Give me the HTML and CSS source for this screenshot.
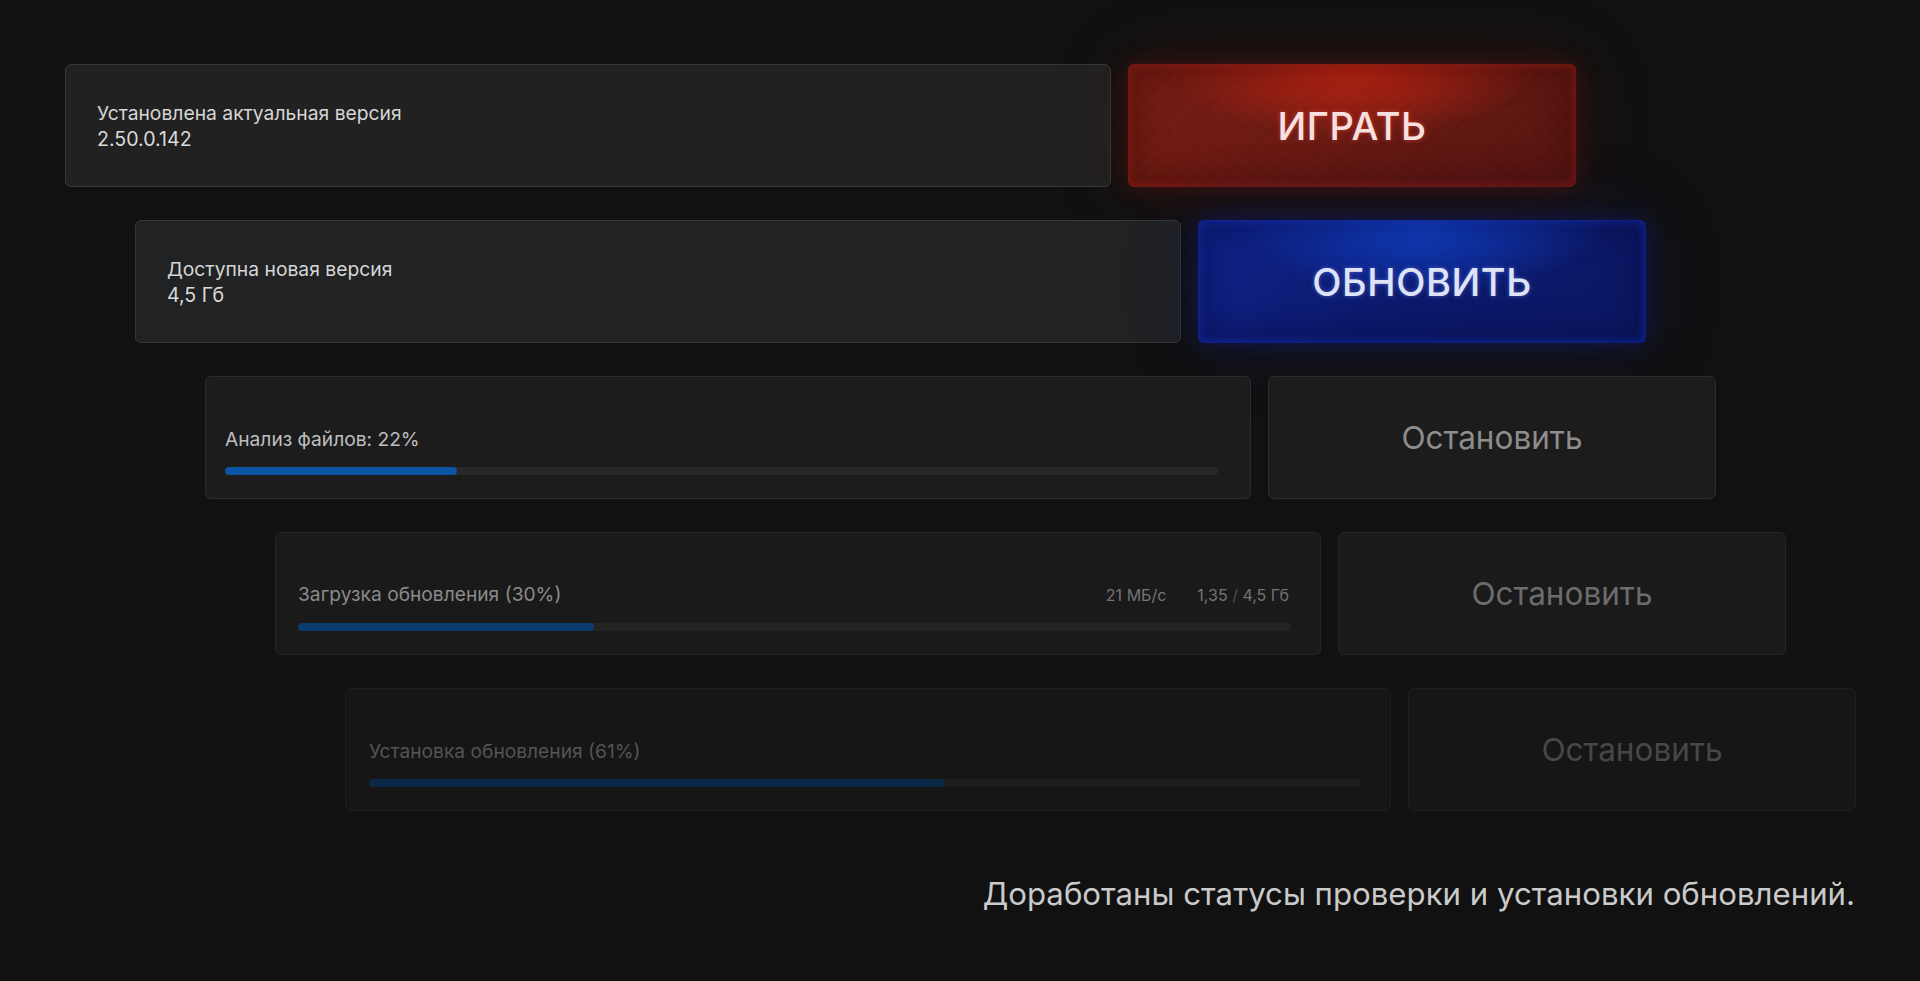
FILE: index.html
```html
<!DOCTYPE html>
<html lang="ru">
<head>
<meta charset="utf-8">
<title>Статусы обновлений</title>
<link rel="stylesheet" href="styles.css">
</head>
<body>
<main class="stack">
  <div class="row row-1">
    <div class="card card-1">
      <div class="info">
        <div class="info-label">Установлена актуальная версия</div>
        <div class="info-value">2.50.0.142</div>
      </div>
    </div>
    <button class="btn btn-play"><span>ИГРАТЬ</span></button>
  </div>

  <div class="row row-2">
    <div class="card card-2">
      <div class="info">
        <div class="info-label">Доступна новая версия</div>
        <div class="info-value">4,5 Гб</div>
      </div>
    </div>
    <button class="btn btn-update"><span>ОБНОВИТЬ</span></button>
  </div>

  <div class="row row-3">
    <div class="card card-progress card-3">
      <div class="progress-head">
        <span class="progress-label">Анализ файлов: 22%</span>
      </div>
      <div class="track"><div class="fill" style="width:23.4%"></div></div>
    </div>
    <button class="btn btn-stop btn-stop-3">Остановить</button>
  </div>

  <div class="row row-4">
    <div class="card card-progress card-4">
      <div class="progress-head">
        <span class="progress-label">Загрузка обновления (30%)</span>
        <span class="stats">
          <span class="stat">21 МБ/с</span>
          <span class="stat">1,35 <span class="slash">/</span> 4,5 Гб</span>
        </span>
      </div>
      <div class="track"><div class="fill" style="width:29.8%"></div></div>
    </div>
    <button class="btn btn-stop btn-stop-4">Остановить</button>
  </div>

  <div class="row row-5">
    <div class="card card-progress card-5">
      <div class="progress-head">
        <span class="progress-label">Установка обновления (61%)</span>
      </div>
      <div class="track"><div class="fill" style="width:58%"></div></div>
    </div>
    <button class="btn btn-stop btn-stop-5">Остановить</button>
  </div>

  <p class="caption">Доработаны статусы проверки и установки обновлений.</p>
</main>
</body>
</html>
```

FILE: styles.css
```css
html, body {
  margin: 0;
  padding: 0;
  background: #111111;
  font-family: Inter, "Noto Sans", "Liberation Sans", sans-serif;
}

.stack {
  box-sizing: border-box;
  width: 1855px;
  padding: 64px 0 0 65px;
  display: flex;
  flex-direction: column;
  align-items: flex-start;
  gap: 33px;
}

.row {
  display: flex;
  gap: 17px;
  height: 123px;
}

.row-2 { margin-left: 70px; }
.row-3 { margin-left: 140px; }
.row-4 { margin-left: 210px; }
.row-5 { margin-left: 280px; }

.card {
  box-sizing: border-box;
  width: 1046px;
  height: 123px;
  border-radius: 6px;
  border: 1px solid #363636;
  background: #222222;
  display: flex;
}

.card-1 { background: #212121; border-color: #383838; }
.card-2 { background: #212223; border-color: #353638; }

.info {
  align-self: center;
  padding-left: 31px;
  font-size: 19.3px;
  line-height: 26px;
  color: #d6d6d6;
}

.info-value { font-size: 19.6px; color: #dadada; }

.card-progress {
  flex-direction: column;
  justify-content: flex-end;
  padding-bottom: 23px;
}

.card-3 {
  background: #1c1c1c;
  border-color: #2c2c2c;
  padding-left: 19px;
  padding-right: 32px;
}
.card-4 {
  background: #1a1a1a;
  border-color: #262626;
  padding-left: 22px;
  padding-right: 29px;
}
.card-5 {
  background: #161616;
  border-color: #1f1f1f;
  padding-left: 23px;
  padding-right: 29px;
}

.progress-head {
  display: flex;
  justify-content: space-between;
  align-items: baseline;
  margin-bottom: 16px;
  line-height: 24px;
}

.progress-label {
  font-size: 19.2px;
}

.card-3 .progress-label { color: #bfbfbf; }
.card-4 .progress-label { color: #8b8b8b; }
.card-5 .progress-label { color: #545454; }

.stats {
  display: flex;
  gap: 31px;
  font-size: 16px;
  color: #747474;
  padding-right: 2px;
}

.slash { color: #4e4e4e; }

.track {
  height: 8px;
  border-radius: 4px;
  background: #282828;
  overflow: hidden;
}
.card-4 .track { background: #232323; }
.card-5 .track { background: #1d1d1d; }

.fill {
  height: 100%;
  border-radius: 4px;
}
.card-3 .fill { background: #0b56a4; }
.card-4 .fill { background: #0a3c70; }
.card-5 .fill { background: #0b2946; }

.btn {
  box-sizing: border-box;
  width: 448px;
  height: 123px;
  border-radius: 6px;
  border: 0;
  padding: 0;
  margin: 0;
  font-family: inherit;
  display: flex;
  align-items: center;
  justify-content: center;
  cursor: pointer;
}

.btn-play {
  font-size: 38px;
  font-weight: 500;
  letter-spacing: 0.6px;
  color: #f8e0e0;
  text-shadow: 0 0 4px rgba(255, 80, 70, 0.55);
  background:
    radial-gradient(ellipse 42% 60% at 50% 0%, rgba(204, 38, 20, 0.95) 0%, rgba(204, 38, 20, 0) 100%),
    repeating-linear-gradient(135deg, rgba(255, 255, 255, 0.006) 0 5px, rgba(0, 0, 0, 0.01) 5px 10px),
    linear-gradient(135deg, #761c13 0%, #6a1a12 45%, #561510 100%);
  box-shadow:
    inset 0 0 8px 2px rgba(140, 30, 20, 0.75),
    inset 0 0 30px 10px rgba(50, 8, 4, 0.4),
    0 0 22px rgba(170, 28, 18, 0.26),
    0 0 80px rgba(130, 20, 12, 0.2);
}

.btn-update {
  font-size: 38px;
  font-weight: 500;
  letter-spacing: 0.6px;
  color: #dfe3f8;
  text-shadow: 0 0 4px rgba(120, 140, 255, 0.55);
  background:
    radial-gradient(ellipse 42% 60% at 50% 0%, rgba(18, 70, 212, 0.95) 0%, rgba(18, 70, 212, 0) 100%),
    linear-gradient(135deg, #0f228a 0%, #0c1a6c 50%, #0b1762 100%);
  box-shadow:
    inset 0 0 8px 2px rgba(20, 46, 170, 0.75),
    inset 0 0 30px 10px rgba(4, 8, 50, 0.4),
    0 0 22px rgba(20, 44, 200, 0.28),
    0 0 80px rgba(14, 30, 160, 0.2);
}

.btn-stop {
  font-size: 31.5px;
  border: 1px solid #2a2a2a;
  background: #1c1c1c;
}
.btn-stop-3 { color: #8d8d8d; background: #1c1c1c; border-color: #2c2c2c; }
.btn-stop-4 { color: #6c6c6c; background: #1a1a1a; border-color: #262626; }
.btn-stop-5 { color: #474747; background: #161616; border-color: #1f1f1f; }

.caption {
  align-self: stretch;
  margin: 31px 0 0 0;
  text-align: right;
  font-size: 31.2px;
  line-height: 38px;
  color: #cacaca;
}
```
